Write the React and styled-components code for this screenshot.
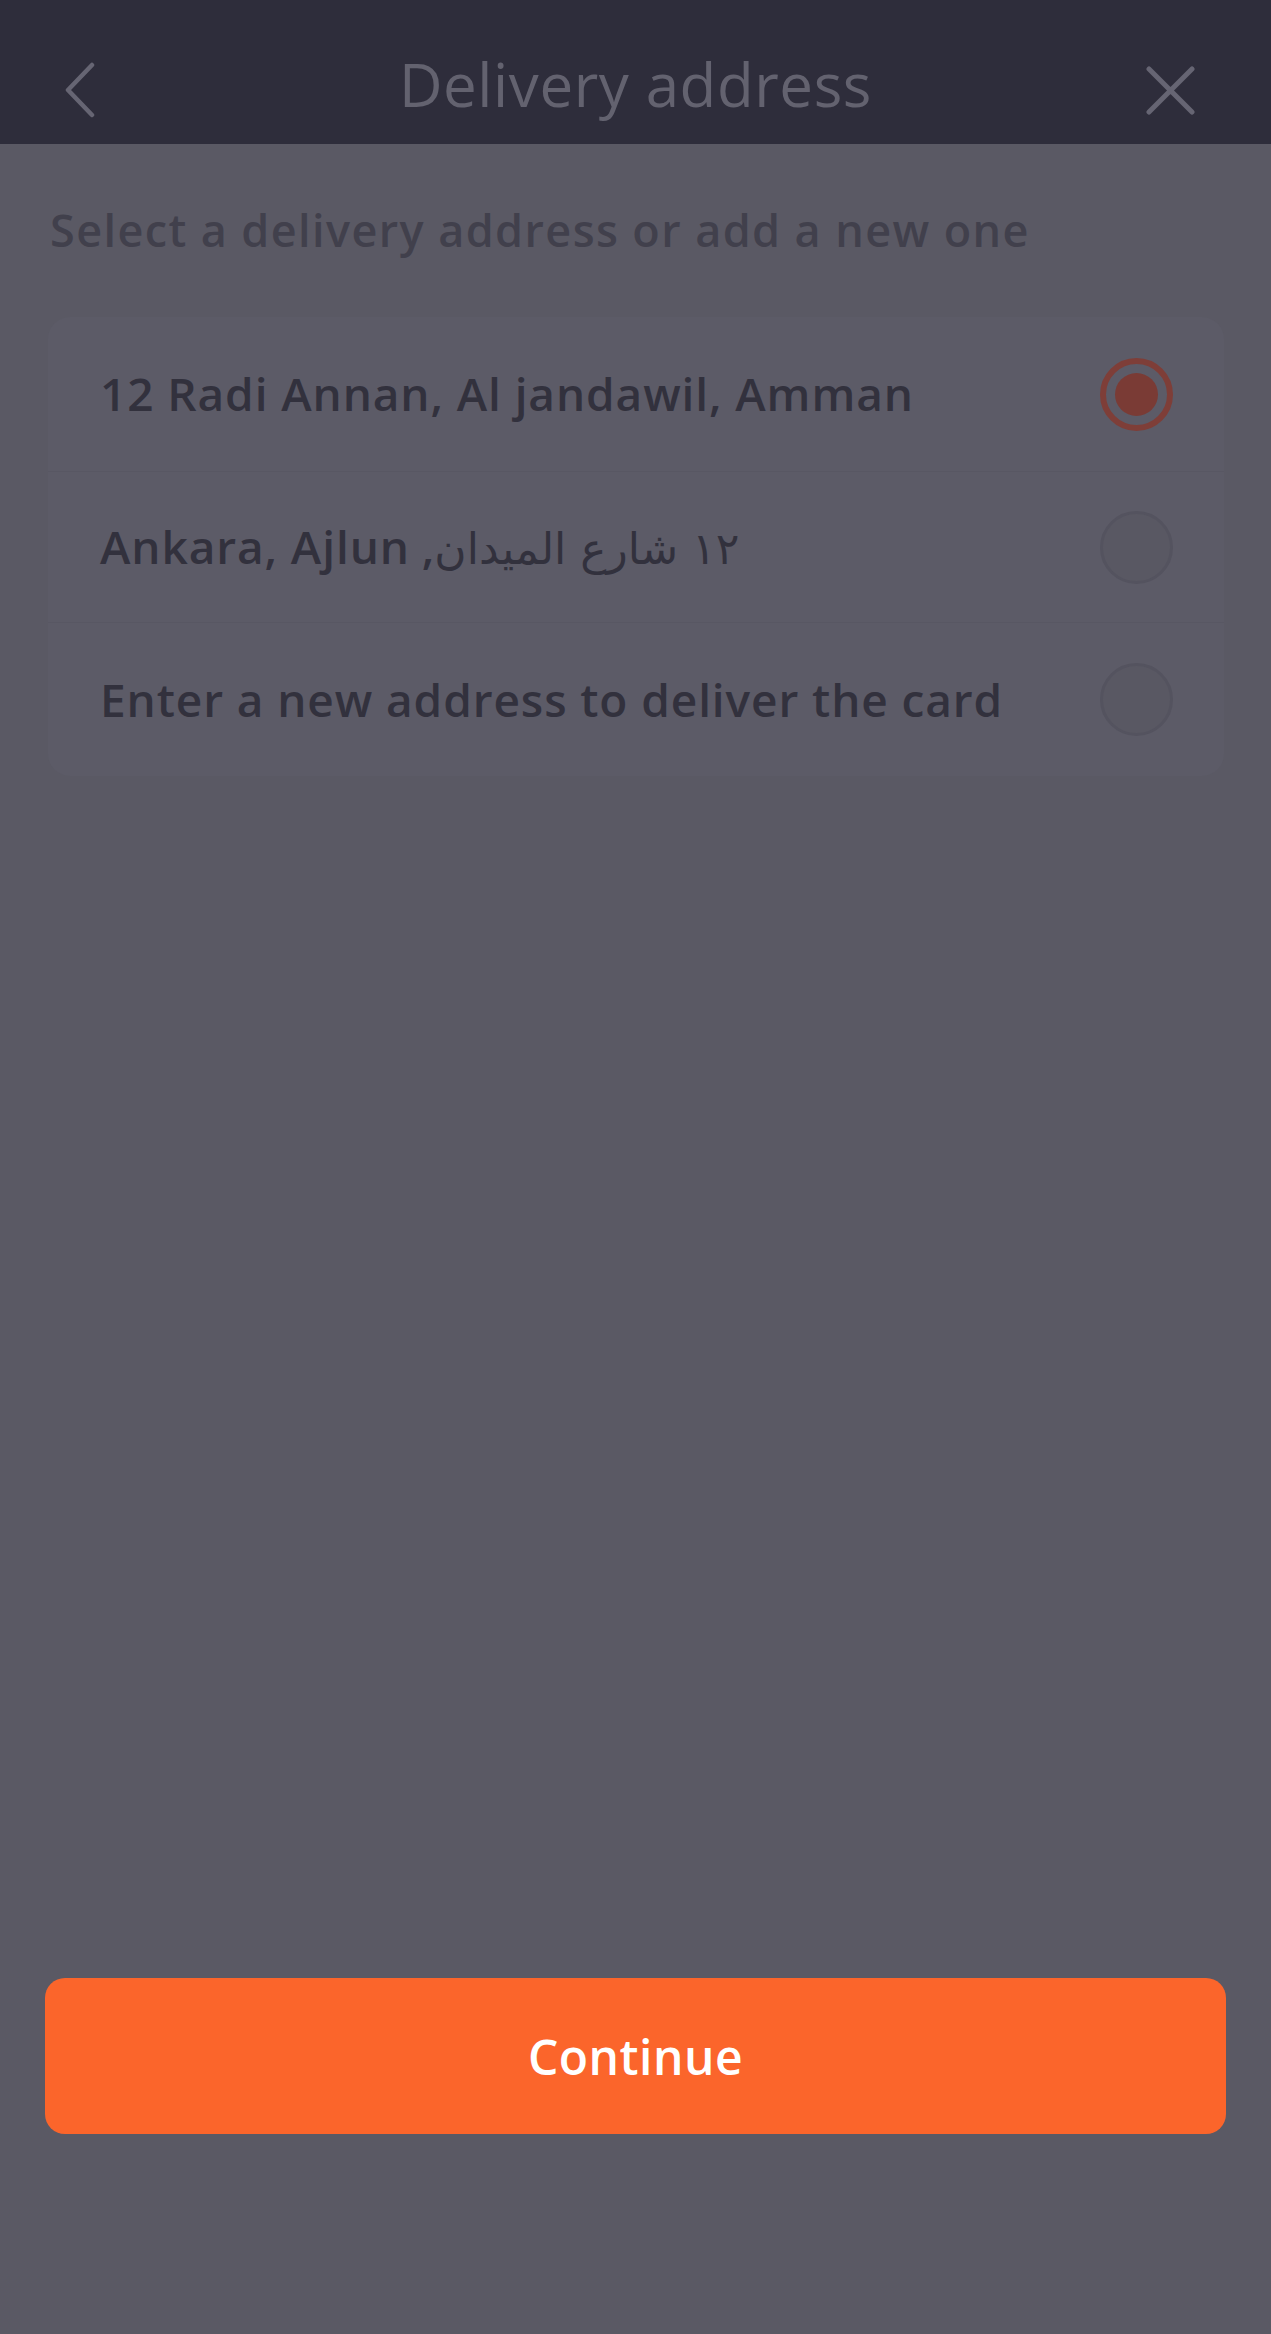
import React, { useState } from "react";
import styled, { createGlobalStyle } from "styled-components";

const Global = createGlobalStyle`
  html, body { margin: 0; padding: 0; background: #5a5964; }
  * { box-sizing: border-box; }
  body { font-family: "Open Sans", "DejaVu Sans", sans-serif; }
`;

const Page = styled.div`
  min-height: 2334px;
  display: flex;
  flex-direction: column;
  background: #5a5964;
`;

const Header = styled.header`
  height: 144px;
  background: #2e2d3b;
  display: grid;
  grid-template-columns: 140px 1fr 140px;
  align-items: center;
  padding-top: 36px;
`;

const IconButton = styled.button`
  background: none;
  border: 0;
  margin: 0;
  display: flex;
  align-items: center;
  justify-content: ${(p) => (p.$end ? "flex-end" : "flex-start")};
  padding: 0 ${(p) => (p.$end ? "76px" : "0")} 0 ${(p) => (p.$end ? "0" : "64px")};
  height: 100%;
  color: #666573;
  cursor: pointer;
`;

const Title = styled.h1`
  margin: -12px 0 0 0;
  text-align: center;
  font-family: "Open Sans", sans-serif;
  font-weight: 400;
  font-size: 60px;
  line-height: 1.2;
  letter-spacing: 0.6px;
  color: #63626f;
`;

const Subtitle = styled.p`
  margin: 59px 0 0 50px;
  font-size: 45px;
  line-height: 1.2;
  font-weight: 600;
  letter-spacing: 1.4px;
  color: #41404c;
`;

const Card = styled.div`
  margin: 60px 47px 0 48px;
  background: #5c5b67;
  border-radius: 22px;
  display: flex;
  flex-direction: column;
`;

const Row = styled.label`
  height: ${(p) => p.$h}px;
  display: flex;
  align-items: center;
  justify-content: space-between;
  padding: 0 51px 0 52px;
  border-top: ${(p) => (p.$first ? "none" : "1px solid #585763")};
  cursor: pointer;
`;

const RowText = styled.span`
  font-size: 46px;
  line-height: 1.2;
  font-weight: 600;
  letter-spacing: 0.9px;
  color: #32313d;
`;

const Arabic = styled.span`
  font-family: "DejaVu Sans", sans-serif;
  font-weight: 400;
  font-size: 44px;
  letter-spacing: 0;
`;

const Radio = styled.span`
  width: 73px;
  height: 73px;
  flex: none;
  border-radius: 50%;
  display: flex;
  align-items: center;
  justify-content: center;
  border: ${(p) => (p.$on ? "6px solid #7e3e38" : "3px solid #54535f")};
  background: ${(p) => (p.$on ? "transparent" : "#595863")};
`;

const Dot = styled.span`
  width: 43px;
  height: 43px;
  border-radius: 50%;
  background: #7a3b35;
`;

const Spacer = styled.div`
  flex: 1;
`;

const ContinueButton = styled.button`
  margin: 0 45px 200px 45px;
  height: 156px;
  border: 0;
  border-radius: 20px;
  background: #fb652b;
  color: #ffffff;
  font-family: "Open Sans", sans-serif;
  font-weight: 600;
  font-size: 48px;
  letter-spacing: 0.5px;
  cursor: pointer;
`;

const rows = [
  { id: 1, h: 154, text: "12 Radi Annan, Al jandawil, Amman" },
  {
    id: 2,
    h: 151,
    rtl: true,
    text: (
      <>
        <Arabic>١٢ شارع الميدان</Arabic>, Ankara, Ajlun
      </>
    ),
  },
  { id: 3, h: 154, text: "Enter a new address to deliver the card" },
];

export default function App() {
  const [sel, setSel] = useState(1);
  return (
    <Page>
      <Global />
      <Header>
        <IconButton aria-label="Back">
          <svg width="32" height="56" viewBox="0 0 32 56" fill="none">
            <path d="M28 3 L4 28 L28 53" stroke="currentColor" strokeWidth="4.5" strokeLinecap="round" strokeLinejoin="round" />
          </svg>
        </IconButton>
        <Title>Delivery address</Title>
        <IconButton $end aria-label="Close">
          <svg width="49" height="49" viewBox="0 0 49 49" fill="none">
            <path d="M3 3 L46 46 M46 3 L3 46" stroke="currentColor" strokeWidth="5" strokeLinecap="round" />
          </svg>
        </IconButton>
      </Header>
      <Subtitle>Select a delivery address or add a new one</Subtitle>
      <Card>
        {rows.map((r, i) => (
          <Row key={r.id} $h={r.h} $first={i === 0} onClick={() => setSel(r.id)}>
            <RowText dir={r.rtl ? "rtl" : undefined}>{r.text}</RowText>
            <Radio $on={sel === r.id}>{sel === r.id && <Dot />}</Radio>
          </Row>
        ))}
      </Card>
      <Spacer />
      <ContinueButton>Continue</ContinueButton>
    </Page>
  );
}
